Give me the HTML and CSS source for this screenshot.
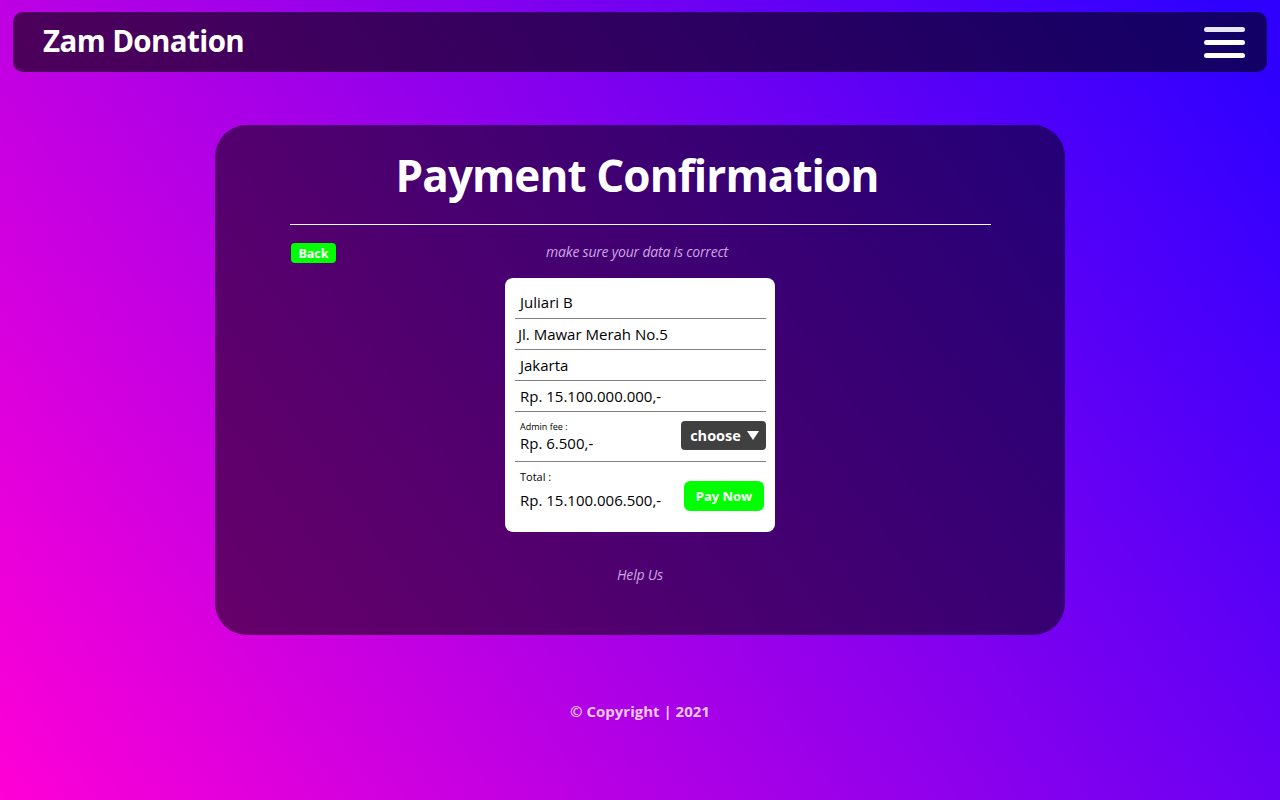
FILE: index.html
```html
<!DOCTYPE html>
<html lang="id">
<head>
<meta charset="utf-8">
<title>Zam Donation - Payment Confirmation</title>
<link rel="stylesheet" href="styles.css">
</head>
<body>
<header class="navbar">
  <div class="brand">Zam Donation</div>
  <button class="burger" aria-label="menu">
    <span></span><span></span><span></span>
  </button>
</header>

<main class="card">
  <h1 class="title">Payment Confirmation</h1>
  <div class="rule"></div>
  <div class="subbar">
    <button class="back">Back</button>
    <p class="hint">make sure your data is correct</p>
  </div>

  <div class="receipt">
    <div class="row">Juliari B</div>
    <div class="row row-tight">Jl. Mawar Merah No.5</div>
    <div class="row">Jakarta</div>
    <div class="row">Rp. 15.100.000.000,-</div>
    <div class="row row-split">
      <div class="stack">
        <span class="label-sm">Admin fee :</span>
        <span class="amount">Rp. 6.500,-</span>
      </div>
      <button class="choose">choose <span class="tri"></span></button>
    </div>
    <div class="row row-split row-last">
      <div class="stack">
        <span class="label-md">Total :</span>
        <span class="amount">Rp. 15.100.006.500,-</span>
      </div>
      <button class="pay">Pay Now</button>
    </div>
  </div>

  <p class="help">Help Us</p>
</main>

<footer class="footer">© Copyright | 2021</footer>
</body>
</html>
```

FILE: styles.css
```css
html, body {
  margin: 0;
  padding: 0;
}
body {
  width: 1280px;
  height: 800px;
  overflow: hidden;
  font-family: "Open Sans", "Noto Sans", sans-serif;
  background: linear-gradient(55deg, #ff00d6 0%, #3000ff 96%);
  padding: 12px 13px 0;
  box-sizing: border-box;
}
.navbar {
  height: 60px;
  border-radius: 10px;
  background: rgba(0, 0, 0, 0.6);
  display: flex;
  align-items: center;
  justify-content: space-between;
  padding: 0 22px 0 30px;
}
.brand {
  color: #fff;
  font-weight: 700;
  font-size: 29.5px;
  letter-spacing: -0.6px;
  margin-top: -4px;
}
.burger {
  background: none;
  border: 0;
  padding: 0;
  display: flex;
  flex-direction: column;
  gap: 8px;
  cursor: pointer;
  margin-top: 0;
}
.burger span {
  display: block;
  width: 41px;
  height: 5px;
  border-radius: 3px;
  background: #fff;
}
.burger span:first-child {
  background: #e8e6f4;
}
.card {
  width: 850px;
  height: 510px;
  margin: 53px auto 0;
  box-sizing: border-box;
  border-radius: 32px;
  background: rgba(0, 0, 0, 0.52);
  padding: 22px 75px 0 75px;
  display: flex;
  flex-direction: column;
  align-items: center;
}
.title {
  margin: 0;
  color: #fff;
  font-size: 44px;
  font-weight: 700;
  line-height: 56px;
  letter-spacing: -0.9px;
  margin-right: 6px;
}
.rule {
  align-self: stretch;
  height: 1px;
  background: #fff;
  margin-top: 21px;
  margin-right: -1px;
}
.subbar {
  align-self: stretch;
  display: flex;
  align-items: center;
  margin-top: 18px;
  position: relative;
}
.back {
  background: #00ff00;
  color: #fff;
  border: 0;
  border-radius: 4px;
  font-family: inherit;
  font-weight: 700;
  font-size: 12.5px;
  height: 20px;
  width: 45px;
  padding: 0;
  margin-left: 1px;
}
.hint {
  position: absolute;
  left: 0;
  right: 6px;
  text-align: center;
  margin: 0;
  font-style: italic;
  font-size: 14px;
  color: #cfa6e6;
  pointer-events: none;
  top: -1px;
  letter-spacing: -0.2px;
}
.receipt {
  width: 270px;
  margin-top: 15px;
  background: #fff;
  border-radius: 8px;
  padding: 5px 9px 0 10px;
  box-sizing: border-box;
}
.row {
  border-bottom: 1px solid #808080;
  color: #000;
  font-size: 15px;
  height: 30px;
  line-height: 30px;
  padding-left: 5px;
  letter-spacing: 0;
}
.row:first-child {
  height: 35px;
  line-height: 38px;
}
.row-tight {
  padding-left: 3px;
}
.row-split {
  display: flex;
  align-items: center;
  justify-content: space-between;
  height: 49px;
  line-height: normal;
  padding-right: 0;
}
.row-last {
  border-bottom: 0;
  height: 70px;
  padding-bottom: 14px;
  box-sizing: border-box;
  padding-right: 2px;
}
.stack {
  display: flex;
  flex-direction: column;
}
.label-sm {
  font-size: 9px;
  line-height: 12px;
}
.label-md {
  font-size: 11px;
  line-height: 14px;
  margin-bottom: 6px;
}
.amount {
  font-size: 15px;
  line-height: 20px;
}
.choose {
  background: #404040;
  color: #fff;
  border: 0;
  border-radius: 4px;
  font-family: inherit;
  font-weight: 700;
  font-size: 14.5px;
  height: 29px;
  width: 85px;
  padding: 0 0 0 2px;
  display: flex;
  align-items: center;
  justify-content: center;
  gap: 6px;
  margin-top: -2px;
}
.tri {
  width: 0;
  height: 0;
  border-left: 6.5px solid transparent;
  border-right: 6.5px solid transparent;
  border-top: 9px solid #fff;
}
.pay {
  background: #00ff00;
  color: #fff;
  border: 0;
  border-radius: 6px;
  font-family: inherit;
  font-weight: 700;
  font-size: 13px;
  height: 30px;
  width: 80px;
  padding: 0;
  margin-top: 12px;
}
.help {
  margin: 33px 0 0;
  font-style: italic;
  font-size: 14px;
  color: #cfa6e6;
  letter-spacing: -0.2px;
}
.footer {
  text-align: center;
  margin-top: 66px;
  color: #f2c8f4;
  font-weight: 700;
  font-size: 15px;
}
```
